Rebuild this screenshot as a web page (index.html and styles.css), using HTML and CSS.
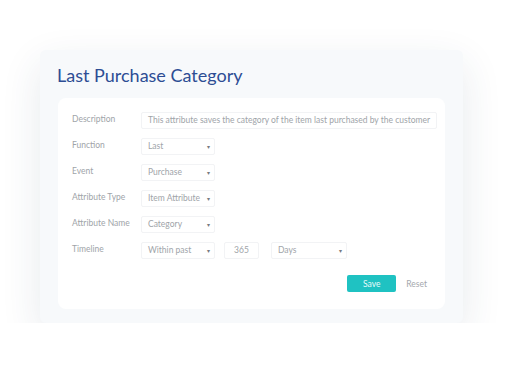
FILE: index.html
```html
<!DOCTYPE html>
<html>
  <head>
    <title>Last Purchase Category</title>
    <link rel="stylesheet" href="styles.css">
  </head>
  <body>
    <div class="panel">
      <h1 class="title">Last Purchase Category</h1>
      <div class="card">
        <div class="form">
          <div class="label">Description</div>
          <div class="field wide">This attribute saves the category of the item last purchased by the customer</div>

          <div class="label">Function</div>
          <div class="row"><div class="field select">Last<span class="arrow">&#9662;</span></div></div>

          <div class="label">Event</div>
          <div class="row"><div class="field select">Purchase<span class="arrow">&#9662;</span></div></div>

          <div class="label">Attribute Type</div>
          <div class="row"><div class="field select">Item Attribute<span class="arrow">&#9662;</span></div></div>

          <div class="label">Attribute Name</div>
          <div class="row"><div class="field select">Category<span class="arrow">&#9662;</span></div></div>

          <div class="label">Timeline</div>
          <div class="row">
            <div class="field select">Within past<span class="arrow">&#9662;</span></div>
            <div class="field num">365</div>
            <div class="field select days">Days<span class="arrow">&#9662;</span></div>
          </div>
        </div>
        <div class="actions">
          <button class="save">Save</button>
          <button class="reset">Reset</button>
        </div>
      </div>
    </div>
  </body>
</html>
```

FILE: styles.css
```css
body {
  margin: 0;
  background: #ffffff;
  font-family: "Lato", "Open Sans", sans-serif;
}
.panel {
  width: 423px;
  height: 273px;
  box-sizing: border-box;
  margin: 50px 0 0 40px;
  padding: 14px 18px 15px 18px;
  background: #f7f9fb;
  border-radius: 6px;
  box-shadow: 0 14px 40px rgba(40, 60, 90, 0.11);
}
.title {
  margin: 0 0 12px -1px;
  font-size: 18px;
  font-weight: 400;
  line-height: 22px;
  color: #2d4d94;
}
.card {
  height: 211px;
  box-sizing: border-box;
  padding: 14px 8px 16px 14px;
  background: #ffffff;
  border-radius: 8px;
}
.form {
  display: grid;
  grid-template-columns: 69px 1fr;
  row-gap: 9px;
}
.label {
  font-size: 8.5px;
  color: #a0a4a9;
  line-height: 13px;
  padding-top: 1px;
}
.row {
  display: flex;
  gap: 9px;
}
.field {
  height: 17px;
  box-sizing: border-box;
  border: 1px solid #f2f3f5;
  border-radius: 2px;
  padding: 0 6px;
  font-size: 8.5px;
  line-height: 15px;
  color: #a0a4a9;
}
.wide {
  white-space: nowrap;
}
.select {
  width: 74px;
  display: flex;
  justify-content: space-between;
  padding-right: 4px;
  white-space: nowrap;
}
.arrow {
  font-size: 6px;
  color: #777b80;
  padding-left: 3px;
}
.num {
  width: 35px;
  text-align: center;
}
.days {
  width: 76px;
  margin-left: 3px;
}
.actions {
  display: flex;
  justify-content: flex-end;
  align-items: center;
  gap: 10px;
  margin-top: 16px;
  padding-right: 10px;
}
.save {
  width: 49px;
  height: 17px;
  border: none;
  border-radius: 2px;
  background: #1fc2c2;
  color: #e9fbfb;
  font-family: inherit;
  font-size: 8.5px;
  padding: 0;
}
.reset {
  border: none;
  background: none;
  color: #a4a8ad;
  font-family: inherit;
  font-size: 8.5px;
  padding: 0;
}
```
